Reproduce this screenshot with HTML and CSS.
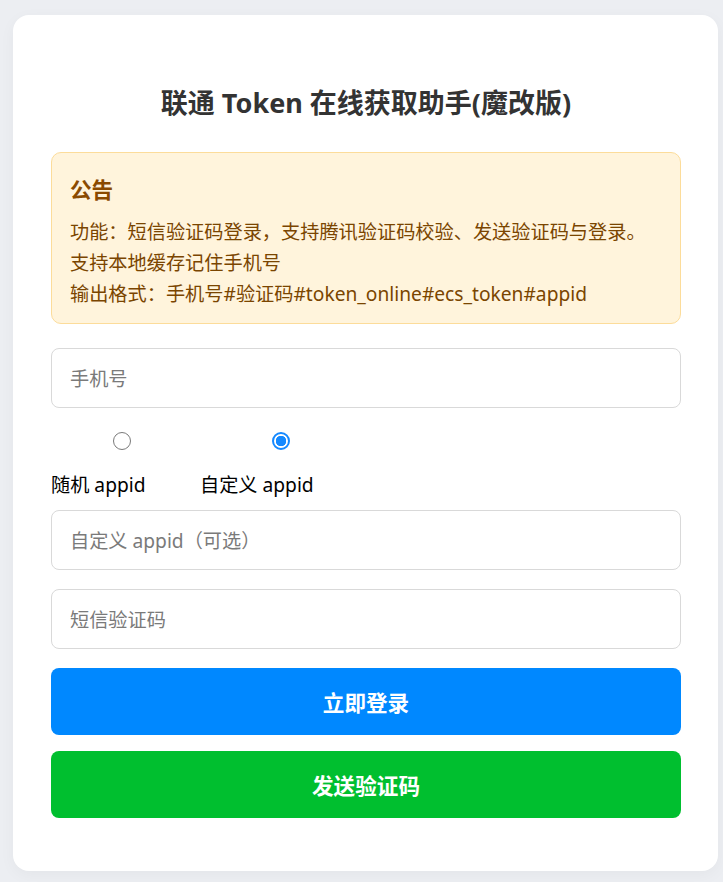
FILE: index.html
```html
<!DOCTYPE html>
<html lang="zh-CN">
<head>
<meta charset="utf-8">
<title>联通 Token 在线获取助手(魔改版)</title>
<link rel="stylesheet" href="styles.css">
</head>
<body>
<div class="card">
  <h2 class="title">联通 Token 在线获取助手(魔改版)</h2>
  <div class="notice">
    <h3 class="notice-title">公告</h3>
    <p class="notice-line">功能：短信验证码登录，支持腾讯验证码校验、发送验证码与登录。</p>
    <p class="notice-line">支持本地缓存记住手机号</p>
    <p class="notice-line">输出格式：手机号#验证码#token_online#ecs_token#appid</p>
  </div>
  <input class="field field-phone" type="text" placeholder="手机号">
  <div class="radio-group">
    <label class="option option-random">
      <input class="radio radio-random" type="radio" name="appid">
      <span class="option-text">随机 appid</span>
    </label>
    <label class="option option-custom">
      <input class="radio radio-custom" type="radio" name="appid" checked>
      <span class="option-text">自定义 appid</span>
    </label>
  </div>
  <input class="field" type="text" placeholder="自定义 appid（可选）">
  <input class="field" type="text" placeholder="短信验证码">
  <button class="btn btn-login" type="button">立即登录</button>
  <button class="btn btn-send" type="button">发送验证码</button>
</div>
</body>
</html>
```
FILE: styles.css
```css
html, body {
  margin: 0;
  padding: 0;
}
body {
  background: #eceef2;
  font-family: "Noto Sans", "Noto Sans CJK SC", sans-serif;
  padding: 15px 5px 11px 13px;
}
.card {
  background: #ffffff;
  border-radius: 16px;
  padding: 68px 37px 53px 38px;
  box-shadow: 0 4px 16px rgba(0, 0, 0, 0.04);
  display: flex;
  flex-direction: column;
}
.title {
  margin: 0 0 29px;
  text-align: center;
  font-size: 27px;
  line-height: 40px;
  font-weight: 700;
  color: #333333;
}
.notice {
  background: #fff4dc;
  border: 1px solid #fcdc9a;
  border-radius: 10px;
  padding: 17px 18px 14px;
  color: #8a4a00;
}
.notice-title {
  margin: 0 0 6px;
  font-size: 21.6px;
  line-height: 40px;
  font-weight: 700;
  color: #8a4a00;
}
.notice-line {
  margin: 0;
  font-size: 19.2px;
  line-height: 31px;
  color: #7a4500;
}
.field {
  box-sizing: border-box;
  width: 100%;
  height: 60px;
  margin: 0 0 19px;
  padding: 0 18px;
  border: 1px solid #d9d9d9;
  border-radius: 8px;
  font-family: "Noto Sans", "Noto Sans CJK SC", sans-serif;
  font-size: 19.2px;
  color: #333333;
  background: #ffffff;
  outline: none;
}
.field::placeholder {
  color: #7a7a7a;
}
.field-phone {
  margin-top: 24px;
  margin-bottom: 0;
}
.radio-group {
  display: flex;
  margin: 24px 0 12px;
}
.option {
  display: flex;
  flex-direction: column;
  align-items: flex-start;
}
.option-random {
  width: 149px;
}
.radio {
  appearance: none;
  -webkit-appearance: none;
  box-sizing: border-box;
  width: 18px;
  height: 18px;
  margin: 0;
  border: 1.5px solid #7a7a7a;
  border-radius: 50%;
  background: #ffffff;
}
.radio:checked {
  border: 2px solid #1589ff;
  background: radial-gradient(circle, #1589ff 0 5px, #ffffff 5.5px);
}
.radio-random {
  margin-left: 62px;
}
.radio-custom {
  margin-left: 72px;
}
.option-text {
  margin-top: 22px;
  font-size: 19.2px;
  line-height: 26px;
  color: #000000;
}
.btn {
  box-sizing: border-box;
  width: 100%;
  height: 67px;
  border: none;
  border-radius: 8px;
  font-family: "Noto Sans", "Noto Sans CJK SC", sans-serif;
  font-size: 21.6px;
  font-weight: 700;
  color: #ffffff;
}
.btn-login {
  background: #0088ff;
  margin-bottom: 16px;
}
.btn-send {
  background: #00bf2f;
}
```
